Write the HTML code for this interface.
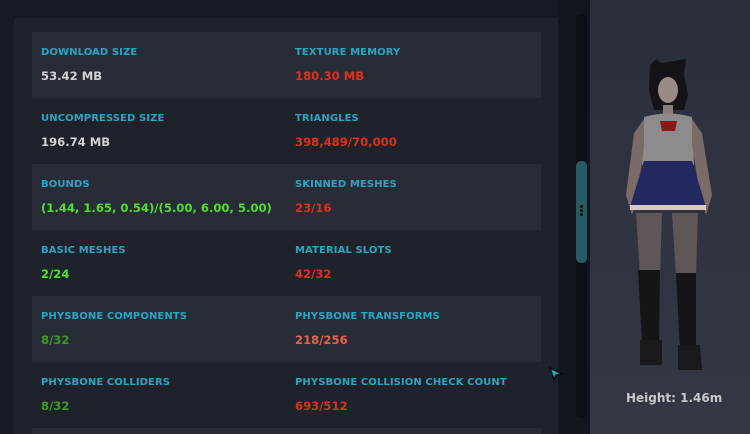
<!DOCTYPE html>
<html><head><style>
*{margin:0;padding:0;box-sizing:border-box}
html,body{width:750px;height:434px;overflow:hidden}
body{background:#161a23;font-family:"DejaVu Sans","Liberation Sans",sans-serif;font-weight:bold;position:relative}
.panel{position:absolute;left:14px;top:18px;width:544px;height:416px;background:#1e222b;overflow:hidden}
.row{position:absolute;left:18px;width:509px;height:66px}
.row.l{background:#282c37}
.lab{position:absolute;top:15px;font-size:10px;color:#2ba6c2;white-space:nowrap;letter-spacing:0.1px}
.val{position:absolute;top:37px;font-size:11.6px;white-space:nowrap}
.w{color:#d2d2d2}.r{color:#e0301c}.g{color:#4ee02a}.dg{color:#3a9c22}.o{color:#e8624a}
.strip{position:absolute;left:558px;top:0;width:32px;height:434px;background:#12161d}
.track{position:absolute;left:576px;top:14px;width:11px;height:404px;background:#0c0f14;border-radius:5px}
.thumb{position:absolute;left:576px;top:161px;width:11px;height:102px;background:#2a5b62;border-radius:5px}
.dot{position:absolute;left:580px;width:3px;height:3px;border-radius:2px;background:#111}
.right{position:absolute;left:590px;top:0;width:160px;height:434px;background:linear-gradient(180deg,#2b2f3c,#343846)}
.h{position:absolute;left:626px;top:391px;font-size:12px;color:#c8c8c8}
</style></head><body>
<div class="panel">
<div class="row l" style="top:14px"><div class="lab" style="left:9px">DOWNLOAD SIZE</div><div class="val w" style="left:9px">53.42 MB</div><div class="lab" style="left:263px">TEXTURE MEMORY</div><div class="val r" style="left:263px">180.30 MB</div></div>
<div class="row" style="top:80px"><div class="lab" style="left:9px">UNCOMPRESSED SIZE</div><div class="val w" style="left:9px">196.74 MB</div><div class="lab" style="left:263px">TRIANGLES</div><div class="val r" style="left:263px">398,489/70,000</div></div>
<div class="row l" style="top:146px"><div class="lab" style="left:9px">BOUNDS</div><div class="val g" style="left:9px">(1.44, 1.65, 0.54)/(5.00, 6.00, 5.00)</div><div class="lab" style="left:263px">SKINNED MESHES</div><div class="val r" style="left:263px">23/16</div></div>
<div class="row" style="top:212px"><div class="lab" style="left:9px">BASIC MESHES</div><div class="val g" style="left:9px">2/24</div><div class="lab" style="left:263px">MATERIAL SLOTS</div><div class="val r" style="left:263px">42/32</div></div>
<div class="row l" style="top:278px"><div class="lab" style="left:9px">PHYSBONE COMPONENTS</div><div class="val dg" style="left:9px">8/32</div><div class="lab" style="left:263px">PHYSBONE TRANSFORMS</div><div class="val o" style="left:263px">218/256</div></div>
<div class="row" style="top:344px"><div class="lab" style="left:9px">PHYSBONE COLLIDERS</div><div class="val dg" style="left:9px">8/32</div><div class="lab" style="left:263px">PHYSBONE COLLISION CHECK COUNT</div><div class="val r" style="left:263px">693/512</div></div>
<div class="row l" style="top:410px;height:6px"></div>
</div>
<div class="strip"></div>
<div class="track"></div><div class="thumb"></div>
<div class="dot" style="top:205px"></div><div class="dot" style="top:209px"></div><div class="dot" style="top:213px"></div>
<svg style="position:absolute;left:548px;top:366px" width="16" height="16"><path d="M2 2 L14 8 L8 9 L6 14 Z" fill="#2aa6c4" stroke="#0a0d12" stroke-width="1.5"/></svg>
<div class="right"></div>
<svg style="position:absolute;left:600px;top:55px" width="140" height="325">
<path d="M50 10 L56 4 L62 8 L74 6 L86 4 L84 20 L88 40 L84 55 L54 55 L49 35 Z" fill="#141418"/>
<ellipse cx="68" cy="35" rx="10" ry="13" fill="#9a8a86"/>
<path d="M63 50 L73 50 L73 62 L63 62 Z" fill="#8a7c78"/>
<path d="M44 62 Q68 55 92 62 L94 110 L42 110 Z" fill="#8d8b8c"/>
<path d="M60 66 L77 66 L75 76 L62 76 Z" fill="#8a1818"/>
<path d="M44 64 L34 78 L26 140 L32 160 L38 140 L44 90 Z" fill="#7a6a68"/>
<path d="M92 64 L102 78 L112 140 L106 160 L100 140 L92 90 Z" fill="#7a6a68"/>
<path d="M44 106 L92 106 L106 152 L30 152 Z" fill="#232960"/>
<path d="M30 150 L106 150 L106 155 L30 155 Z" fill="#d8c8c8"/>
<path d="M36 158 L62 158 L60 220 L40 220 Z" fill="#5f5658"/>
<path d="M72 158 L98 158 L96 220 L76 220 Z" fill="#5f5658"/>
<path d="M38 215 L60 215 L59 290 L42 290 Z" fill="#151517"/>
<path d="M76 218 L96 218 L96 295 L80 295 Z" fill="#151517"/>
<path d="M40 285 L62 285 L62 310 L40 310 Z" fill="#1a1a1c"/>
<path d="M78 290 L100 290 L102 315 L78 315 Z" fill="#1a1a1c"/>
</svg>
<div class="h">Height: 1.46m</div>
</body></html>
